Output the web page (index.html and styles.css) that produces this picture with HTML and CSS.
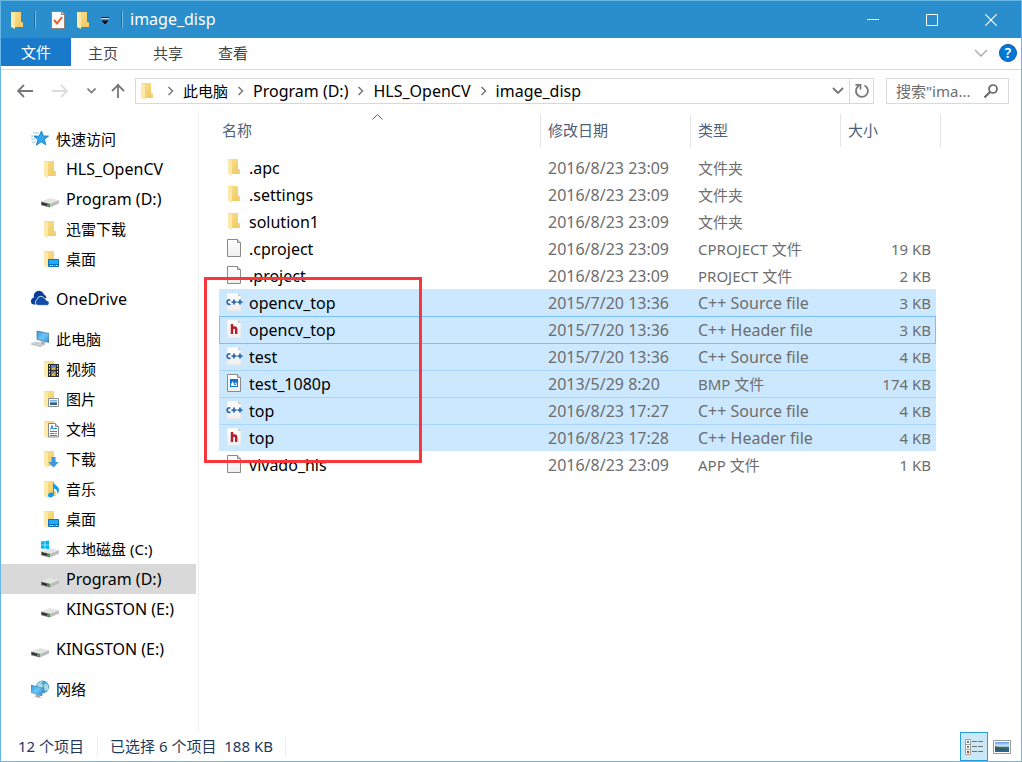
FILE: index.html
```html
<!DOCTYPE html>
<html lang="zh-CN">
<head>
<meta charset="utf-8">
<title>image_disp</title>
<link rel="stylesheet" href="styles.css">
</head>
<body>
<svg class="defs" aria-hidden="true">
  <defs>
    <linearGradient id="gold" x1="0" y1="0" x2="1" y2="1"><stop offset="0" stop-color="#fbe08e"/><stop offset="1" stop-color="#efc860"/></linearGradient>
    <linearGradient id="screen" x1="0" y1="0" x2="1" y2="1"><stop offset="0" stop-color="#2f9be0"/><stop offset=".5" stop-color="#6cc6f6"/><stop offset="1" stop-color="#2b93dc"/></linearGradient>
    <linearGradient id="paper" x1="0" y1="0" x2="0" y2="1"><stop offset="0" stop-color="#ffffff"/><stop offset="1" stop-color="#f0eeee"/></linearGradient>
    <linearGradient id="sea" x1="0" y1="0" x2="0" y2="1"><stop offset="0" stop-color="#5d9df0"/><stop offset=".4" stop-color="#d5ecfa"/><stop offset=".55" stop-color="#3d6f72"/><stop offset="1" stop-color="#2c5f9c"/></linearGradient>
  </defs>
  <symbol id="folder" viewBox="0 0 18 18"><path d="M3 1h10v10l2 1v4H3z" fill="url(#gold)"/><path d="M13 11l2 .8V16h-2z" fill="#f6d276"/><path d="M3 1l4 2v15l-4-2z" fill="#fde9a9"/></symbol>
  <symbol id="drive" viewBox="0 0 18 18"><path d="M0 11.5L9 8l9 2.2-9 3.5z" fill="#e4e4e4"/><path d="M9 13.7l9-3.5v3.3l-9 4z" fill="#bdbdbd"/><path d="M0 11.5l9 2.2v3.8l-9-2.3z" fill="#777"/><path d="M1 12.6l7 1.8v1.8l-7-1.8z" fill="#2c2c2c"/><path d="M6 14.2h2v2H6z" fill="#3fae4c"/></symbol>
  <symbol id="windrive" viewBox="0 0 18 18"><use href="#drive"/><path d="M0 1.6l3.7-.5v3.6H0zM4.3 1L8 .4v4.3H4.3zM0 5.3h3.7v3.5L0 8.4zM4.3 5.3H8V9l-3.7-.2z" fill="#00b6f1"/></symbol>
  <symbol id="desktop" viewBox="0 0 18 18"><use href="#folder"/><path d="M7.500 9.500h10v7h-10z" fill="#22aaff" stroke="#0c70b8"/><path d="M8 14.500h9" stroke="#0870b6"/><path d="M9 15.500h1m1 0h1m3 0h1" stroke="#fff"/></symbol>
  <symbol id="star" viewBox="0 0 18 18"><path d="M0 6h6M0 9h5M1 12h4M2 3h6" stroke="#92c9ed"/><path d="M10.500 1l1.700 5 5.300.1-4.200 3.300 1.400 5.400-4.500-3-4.800 3.300 1.700-5.500-4-3.300 5.100-.1z" fill="#35a7ea" stroke="#1585ce"/></symbol>
  <symbol id="cloud" viewBox="0 0 18 18"><path d="M0 11.500A3.600 3.600 0 013 7.600 5 5 0 0113 4.500a4 4 0 012.500 3l-9 7H3a3 3 0 01-3-3z" fill="#0c3e94"/><path d="M5.500 14.600a3 3 0 01.5-5 4 4 0 017.400-1.300 3 3 0 012.200 2.200 2.500 2.500 0 01.8 4.900H7a3 3 0 01-1.500-.8z" fill="#0f4dad" stroke="#fff" stroke-width=".8"/></symbol>
  <symbol id="pc" viewBox="0 0 18 18"><path d="M6 1l12 2.500v9L6 9.500z" fill="url(#screen)" stroke="#5c6e7c" stroke-width=".7"/><path d="M10 11l4 1v2h-4z" fill="#aab2b8"/><path d="M0 14l5-2 9 2.500-5 2z" fill="#e1e5e8" stroke="#a9b0b5" stroke-width=".7"/><path d="M2 14l8 2M4 13l8 2" stroke="#a9b0b5" stroke-width=".6"/></symbol>
  <symbol id="video" viewBox="0 0 18 18"><use href="#folder"/><path d="M7 4h11v13H7z" fill="#2a2a2a"/><path d="M10 5h5v5h-5zM10 11h5v5h-5z" fill="#4c7ed6"/><path d="M11 8l3-1v3h-3zM11 14l3-2v4h-3z" fill="#d9ae43"/><path d="M8.500 5v12M16.500 5v12" stroke="#eee" stroke-dasharray="1.500 1.500"/></symbol>
  <symbol id="picture" viewBox="0 0 18 18"><use href="#folder"/><path d="M7.500 8.500h10v8h-10z" fill="#fff" stroke="#8d8d8d"/><path d="M9 10h7v5H9z" fill="url(#sea)"/></symbol>
  <symbol id="docs" viewBox="0 0 18 18"><use href="#folder"/><path d="M7.500 3.500h7l3 3v10.500h-10z" fill="#fff" stroke="#888"/><path d="M14.500 3.500v3h3" fill="#ddd" stroke="#888"/><path d="M9.500 9.500l1.500-4 1.500 4M10 8h2M13 8.500h3M9 11.500h7M9 13.500h4M9 15.500h7" fill="none" stroke="#2289d4"/><path d="M13.500 13h2.500v1h-2.500z" fill="#4eac82"/></symbol>
  <symbol id="down" viewBox="0 0 18 18"><use href="#folder"/><path d="M10.500 7h4v5h3.300l-5.300 5.500-5.300-5.500h3.300z" fill="#3996df"/></symbol>
  <symbol id="music" viewBox="0 0 18 18"><use href="#folder"/><path d="M12 2c1 3 6 4 6 8 0 2-1 3-2 4 1-3-1-5-3-5.500V14c0 4-6 4.500-6 1.500 0-2.500 3-3.500 5-2.500z" fill="#0a9df2"/></symbol>
  <symbol id="network" viewBox="0 0 18 18"><circle cx="11.500" cy="7" r="6.500" fill="#4d9dc5"/><path d="M6 5c2-4 5-4 6-4l-2 3 3 1-3 4-3-1zM14 3l3 2v5l-3 1-1-4z" fill="#a8d9e8"/><path d="M0 5l11 3v8L0 12.500z" fill="url(#screen)" stroke="#4a84b0" stroke-width=".6"/><path d="M5 14.500l4 1v1.500l2 1-5-.5-2-1z" fill="#aaa"/></symbol>
  <symbol id="file" viewBox="0 0 18 18"><path d="M2.500.5h10l3 3v14h-13z" fill="url(#paper)" stroke="#8a8a8a"/><path d="M12.500.5v3h3" fill="#ddd" stroke="#8a8a8a"/></symbol>
  <symbol id="bmp" viewBox="0 0 18 18"><use href="#file"/><path d="M5 5h8v8H5z" fill="#0877d8"/><path d="M6 10l2-3 2 3 1-2 1 2v2H6z" fill="#fff"/><path d="M8 7l2 4 1-1" fill="none" stroke="#0877d8"/></symbol>
  <symbol id="sheet" viewBox="0 0 18 18"><path d="M2 0h11l3 3v15H2z" fill="url(#paper)" stroke="#dcdfe2" stroke-width=".6"/><path d="M13 0v3h3z" fill="#c9ccd0"/></symbol>
  <symbol id="cpp" viewBox="0 0 18 18"><use href="#sheet"/><path d="M5.300 7.200a2.200 2.200 0 10.1 3.800M6.500 9.100h5M9 6.600v5M12.500 9.100h5M15 6.600v5" fill="none" stroke="#2d6db0" stroke-width="1.800"/></symbol>
  <symbol id="hdr" viewBox="0 0 18 18"><use href="#sheet"/><path d="M7 4v10M7 9.200c.5-2.300 4.200-2.300 4.200.2V14" fill="none" stroke="#b51f2b" stroke-width="2.400"/></symbol>
  <symbol id="chev" viewBox="0 0 7 10"><path d="M1.500 1l4 4-4 4" fill="none" stroke="#777" stroke-width="1.500"/></symbol>
</svg>

<div class="window">
  <header class="titlebar">
    <svg class="ico"><use href="#folder"/></svg>
    <span class="bar"></span>
    <button class="quick" aria-label="属性"><svg class="ico" viewBox="0 0 18 18"><path d="M2.500.5h10l3 3v14h-13z" fill="#fbfbfb" stroke="#8b8480"/><path d="M12.500.5v3h3" fill="#ddd" stroke="#8b8480"/><path d="M5 9l3 3.500L13 6" fill="none" stroke="#ee5b21" stroke-width="2"/></svg></button>
    <button class="quick" aria-label="新建文件夹"><svg class="ico"><use href="#folder"/></svg></button>
    <button class="quick more" aria-label="自定义快速访问工具栏"><svg width="8" height="8" viewBox="0 0 8 8"><path d="M0 1.500h8" stroke="#cde6f5"/><path d="M0 .5h8M1 4h6L4 7z" stroke="#111" fill="#111" stroke-width="1"/></svg></button>
    <span class="bar"></span>
    <h1 class="title">image_disp</h1>
    <div class="controls">
      <button aria-label="最小化"><svg width="12" height="12"><path d="M0 5.500h12" stroke="#fff"/></svg></button>
      <button aria-label="最大化"><svg width="12" height="12"><path d="M.5.5h11v11H.5z" fill="none" stroke="#fff"/></svg></button>
      <button aria-label="关闭"><svg width="12" height="12"><path d="M0 0l12 12M12 0L0 12" stroke="#fff" stroke-width="1.200"/></svg></button>
    </div>
  </header>

  <nav class="ribbon">
    <button class="tab file">文件</button>
    <button class="tab">主页</button>
    <button class="tab">共享</button>
    <button class="tab">查看</button>
    <div class="ribbon-end">
      <button aria-label="展开功能区"><svg width="14" height="8"><path d="M1 1l6 6 6-6" fill="none" stroke="#aaa" stroke-width="1.400"/></svg></button>
      <button class="help" aria-label="帮助">?</button>
    </div>
  </nav>

  <div class="addressbar">
    <div class="history">
      <button aria-label="后退"><svg width="16" height="14"><path d="M1 7h15M7 1L1 7l6 6" fill="none" stroke="#777" stroke-width="1.800"/></svg></button>
      <button aria-label="前进"><svg width="16" height="14"><path d="M0 7h15M9 1l6 6-6 6" fill="none" stroke="#dcdcdc" stroke-width="1.800"/></svg></button>
      <button aria-label="最近浏览的位置"><svg width="9" height="6"><path d="M.5.5l4 4 4-4" fill="none" stroke="#777" stroke-width="1.600"/></svg></button>
      <button aria-label="上移"><svg width="14" height="16"><path d="M7 15V1M1 8l6-6 6 6" fill="none" stroke="#777" stroke-width="1.800"/></svg></button>
    </div>
    <div class="path">
      <svg class="ico"><use href="#folder"/></svg>
      <svg class="chev"><use href="#chev"/></svg><button>此电脑</button>
      <svg class="chev"><use href="#chev"/></svg><button class="latin">Program (D:)</button>
      <svg class="chev"><use href="#chev"/></svg><button class="latin">HLS_OpenCV</button>
      <svg class="chev"><use href="#chev"/></svg><button class="latin">image_disp</button>
      <button class="drop" aria-label="历史记录"><svg width="12" height="8"><path d="M1 1l5 5 5-5" fill="none" stroke="#777" stroke-width="1.900"/></svg></button>
      <button class="refresh" aria-label="刷新"><svg width="16" height="16" viewBox="0 0 16 16"><path d="M10.500 2.500a6 6 0 11-5.500.2" fill="none" stroke="#777" stroke-width="1.800"/><path d="M1.500 1.800h5v4.700" fill="none" stroke="#777" stroke-width="1.700"/></svg></button>
    </div>
    <label class="search"><input type="text" placeholder='搜索"ima...' aria-label="搜索"><svg width="14" height="14"><circle cx="9" cy="5" r="4" fill="none" stroke="#666" stroke-width="1.700"/><path d="M6 8l-5.500 5.500" stroke="#666" stroke-width="2"/></svg></label>
  </div>

  <div class="content">
    <aside class="tree">
      <ul>
        <li class="root"><a href="#"><svg class="ico"><use href="#star"/></svg>快速访问</a></li>
        <li><a href="#" class="latin"><svg class="ico"><use href="#folder"/></svg>HLS_OpenCV</a></li>
        <li><a href="#" class="latin"><svg class="ico"><use href="#drive"/></svg>Program (D:)</a></li>
        <li><a href="#"><svg class="ico"><use href="#folder"/></svg>迅雷下载</a></li>
        <li><a href="#"><svg class="ico"><use href="#desktop"/></svg>桌面</a></li>
      </ul>
      <ul>
        <li class="root"><a href="#" class="latin"><svg class="ico"><use href="#cloud"/></svg>OneDrive</a></li>
      </ul>
      <ul>
        <li class="root"><a href="#"><svg class="ico"><use href="#pc"/></svg>此电脑</a></li>
        <li><a href="#"><svg class="ico"><use href="#video"/></svg>视频</a></li>
        <li><a href="#"><svg class="ico"><use href="#picture"/></svg>图片</a></li>
        <li><a href="#"><svg class="ico"><use href="#docs"/></svg>文档</a></li>
        <li><a href="#"><svg class="ico"><use href="#down"/></svg>下载</a></li>
        <li><a href="#"><svg class="ico"><use href="#music"/></svg>音乐</a></li>
        <li><a href="#"><svg class="ico"><use href="#desktop"/></svg>桌面</a></li>
        <li><a href="#"><svg class="ico"><use href="#windrive"/></svg>本地磁盘 (C:)</a></li>
        <li class="current"><a href="#" class="latin"><svg class="ico"><use href="#drive"/></svg>Program (D:)</a></li>
        <li><a href="#" class="latin"><svg class="ico"><use href="#drive"/></svg>KINGSTON (E:)</a></li>
      </ul>
      <ul>
        <li class="root"><a href="#" class="latin"><svg class="ico"><use href="#drive"/></svg>KINGSTON (E:)</a></li>
      </ul>
      <ul>
        <li class="root"><a href="#"><svg class="ico"><use href="#network"/></svg>网络</a></li>
      </ul>
    </aside>

    <main class="files">
      <table>
        <colgroup><col class="c-name"><col class="c-date"><col class="c-type"><col class="c-size"><col class="c-end"></colgroup>
        <thead>
          <tr><th>名称<svg class="sort" width="11" height="6"><path d="M.5 5.500l5-5 5 5" fill="none" stroke="#666"/></svg></th><th>修改日期</th><th>类型</th><th>大小</th><td></td></tr>
        </thead>
        <tbody>
          <tr><td><span class="name"><svg class="ico"><use href="#folder"/></svg>.apc</span></td><td class="latin">2016/8/23 23:09</td><td>文件夹</td><td></td><td></td></tr>
          <tr><td><span class="name"><svg class="ico"><use href="#folder"/></svg>.settings</span></td><td class="latin">2016/8/23 23:09</td><td>文件夹</td><td></td><td></td></tr>
          <tr><td><span class="name"><svg class="ico"><use href="#folder"/></svg>solution1</span></td><td class="latin">2016/8/23 23:09</td><td>文件夹</td><td></td><td></td></tr>
          <tr><td><span class="name"><svg class="ico"><use href="#file"/></svg>.cproject</span></td><td class="latin">2016/8/23 23:09</td><td>CPROJECT 文件</td><td>19 KB</td><td></td></tr>
          <tr><td><span class="name"><svg class="ico"><use href="#file"/></svg>.project</span></td><td class="latin">2016/8/23 23:09</td><td>PROJECT 文件</td><td>2 KB</td><td></td></tr>
          <tr class="sel"><td><span class="name"><svg class="ico"><use href="#cpp"/></svg>opencv_top</span></td><td class="latin">2015/7/20 13:36</td><td class="latin">C++ Source file</td><td>3 KB</td><td></td></tr>
          <tr class="sel focus"><td><span class="name"><svg class="ico"><use href="#hdr"/></svg>opencv_top</span></td><td class="latin">2015/7/20 13:36</td><td class="latin">C++ Header file</td><td>3 KB</td><td></td></tr>
          <tr class="sel"><td><span class="name"><svg class="ico"><use href="#cpp"/></svg>test</span></td><td class="latin">2015/7/20 13:36</td><td class="latin">C++ Source file</td><td>4 KB</td><td></td></tr>
          <tr class="sel"><td><span class="name"><svg class="ico"><use href="#bmp"/></svg>test_1080p</span></td><td class="latin">2013/5/29 8:20</td><td>BMP 文件</td><td>174 KB</td><td></td></tr>
          <tr class="sel"><td><span class="name"><svg class="ico"><use href="#cpp"/></svg>top</span></td><td class="latin">2016/8/23 17:27</td><td class="latin">C++ Source file</td><td>4 KB</td><td></td></tr>
          <tr class="sel"><td><span class="name"><svg class="ico"><use href="#hdr"/></svg>top</span></td><td class="latin">2016/8/23 17:28</td><td class="latin">C++ Header file</td><td>4 KB</td><td></td></tr>
          <tr><td><span class="name"><svg class="ico"><use href="#file"/></svg>vivado_hls</span></td><td class="latin">2016/8/23 23:09</td><td>APP 文件</td><td>1 KB</td><td></td></tr>
        </tbody>
      </table>
      <div class="marker"></div>
    </main>
  </div>

  <footer class="status">
    <span>12 个项目</span>
    <span class="picked">已选择 6 个项目&nbsp; 188 KB</span>
    <div class="views">
      <button class="on" aria-label="详细信息"><svg width="18" height="16"><path d="M.5.5h5v15h-5zM.5 5.500h5M.5 10.500h5" fill="#fff" stroke="#a0a0a0"/><path d="M7 2.500h5m1 0h5M7 7.500h5m1 0h5M7 12.500h5m1 0h5" stroke="#707070"/><path d="M2 2h2v2H2z" fill="#3d8ca0"/><path d="M2 7h2v2H2z" fill="#8a7040"/><path d="M2 12h2v2H2z" fill="#c22c18"/></svg></button>
      <button aria-label="大图标"><svg width="18" height="14"><path d="M.5.5h17v13H.5z" fill="#fff" stroke="#9a9a9a"/><path d="M2 2h14v10H2z" fill="url(#sea)"/><path d="M2 6l5 2 9 1v1H2z" fill="#345c50"/></svg></button>
    </div>
  </footer>
</div>
</body>
</html>
```
FILE: styles.css
```css
* { box-sizing: border-box; }
body {
  margin: 0;
  font-family: "Noto Sans", "Noto Sans CJK SC", sans-serif;
  font-size: 15px;
  line-height: 20px;
  color: #000;
}
button, input { font: inherit; color: inherit; }
button { border: 0; padding: 0; background: none; display: flex; align-items: center; justify-content: center; }
a { color: inherit; text-decoration: none; }
ul { list-style: none; margin: 0; padding: 0; }
svg { display: block; flex: none; }
.defs { position: absolute; width: 0; height: 0; }
.ico { width: 18px; height: 18px; }
.latin { font-size: 16px; }

.window {
  display: flex;
  flex-direction: column;
  min-height: 100vh;
  background: #fff;
  border: 1px solid #67b7e6;
}

.titlebar { display: flex; align-items: center; height: 37px; background: #2a8ecc; padding-left: 7px; }
.bar { width: 2px; height: 17px; background: #1c6a9b; border-right: 1px solid #7fbfe5; margin: 0 13px 0 8px; }
.quick + .quick { margin-left: 7px; }
.quick.more { margin-left: 9px; padding-top: 2px; }
.quick.more + .bar { margin: 0 7px 0 12px; }
.title { margin: 0; padding-bottom: 1px; font-size: 16px; font-weight: 400; color: #fff; }
.controls { display: flex; align-self: stretch; margin-left: auto; padding-right: 1px; }
.controls button { width: 59px; }

.ribbon { display: flex; gap: 1px; height: 32px; padding-bottom: 3px; border-bottom: 1px solid #dadbdc; color: #444; }
.tab { padding: 2px 17px 0; }
.tab.file { padding: 0 20px; margin-right: -1px; background: #1979ca; color: #fff; }
.ribbon-end { display: flex; align-items: center; gap: 11px; margin-left: auto; padding: 2px 4px 0 0; }
.help { width: 18px; height: 18px; border-radius: 50%; background: #0078d7; border: 1px solid #0a5ca8; color: #fff; font-size: 14px; font-weight: 600; }

.addressbar { display: flex; align-items: center; height: 42px; padding: 0 12px 0 16px; }
.history { display: flex; align-items: center; gap: 15px; width: 118px; }
.history button:nth-child(-n+2) { margin-right: 4px; }
.path { display: flex; flex: 1; align-items: center; gap: 9px; height: 26px; padding-left: 2px; border: 1px solid #d9d9d9; }
.path button { white-space: nowrap; padding-bottom: 1px; }
.path .ico { margin-right: 2px; }
.chev { width: 7px; height: 10px; }
.path .drop { margin-left: auto; margin-right: -4px; }
.path .refresh { width: 24px; align-self: stretch; border-left: 1px solid #d9d9d9; }
.search { display: flex; align-items: center; width: 123px; height: 26px; margin-left: 12px; padding: 0 10px 0 9px; border: 1px solid #d9d9d9; }
.search input { flex: 1; min-width: 0; padding: 0; border: 0; outline: 0; background: none; }
.search input::placeholder { color: #6d6d6d; opacity: 1; }

.content { display: flex; flex: 1; }
.tree { width: 198px; padding: 12px 2px 0 0; border-right: 1px solid #f0f0f0; }
.tree ul { margin-bottom: 10px; }
.tree a { display: flex; align-items: center; gap: 7px; height: 30px; padding-left: 40px; white-space: nowrap; }
.tree .root a { padding-left: 30px; }
.current { background: #d9d9d9; }

.files { position: relative; flex: 1; padding: 2px 0 0 20px; }
table { width: 722px; table-layout: fixed; border-collapse: separate; border-spacing: 0; }
.c-name { width: 322px; }
.c-date, .c-type { width: 150px; }
.c-size { width: 95px; }
.c-end { width: 5px; }
th { height: 33px; padding: 0 0 2px 7px; font-weight: 400; text-align: left; color: #4c607a; }
th:first-child { padding-left: 3px; }
th:not(:nth-child(4)), thead td { border-right: 1px solid #e5e5e5; }
thead td { padding: 0; }
.sort { position: absolute; left: 173px; top: 2px; }
tbody::before { content: ""; display: block; height: 7px; }
tbody td { height: 27px; padding: 0 0 0 7px; color: #6d6d6d; white-space: nowrap; }
tbody td:nth-child(1) { padding-left: 6px; color: #000; font-size: 16px; }
tbody td:nth-child(4) { padding: 0 5px 0 0; text-align: right; }
tbody td:nth-child(5) { padding: 0; }
.name { display: flex; align-items: center; gap: 6px; }
.name .ico { margin-bottom: 2px; }
.sel td:not(:last-child) { background: #cce8ff; border-top: 1px solid #a6d6ff; }
tr:not(.sel) + .sel td:not(:last-child) { border-top-color: #cce8ff; }
.focus td:not(:last-child), .focus + .sel td:not(:last-child) { border-top-color: #78beff; }
.sel td:first-child { border-left: 1px solid #cce8ff; padding-left: 5px; }
.sel.focus td:first-child { border-left-color: #78beff; }
.focus td:nth-child(4) { border-right: 1px solid #78beff; padding-right: 4px; }
.marker { position: absolute; left: 5px; top: 165px; width: 218px; height: 186px; border: 3px solid #f9363b; }

.status { display: flex; align-items: center; height: 29px; padding-left: 17px; color: #1e395b; }
.status span { margin-bottom: 2px; }
.picked { margin-left: 13px; padding: 0 12px; border-left: 1px solid #eee; border-right: 1px solid #eee; }
.views { display: flex; align-self: stretch; align-items: center; gap: 5px; margin-left: auto; padding-right: 10px; }
.views .on { align-self: stretch; width: 28px; background: #cce8f6; border: 1px solid #26a0da; }
```
